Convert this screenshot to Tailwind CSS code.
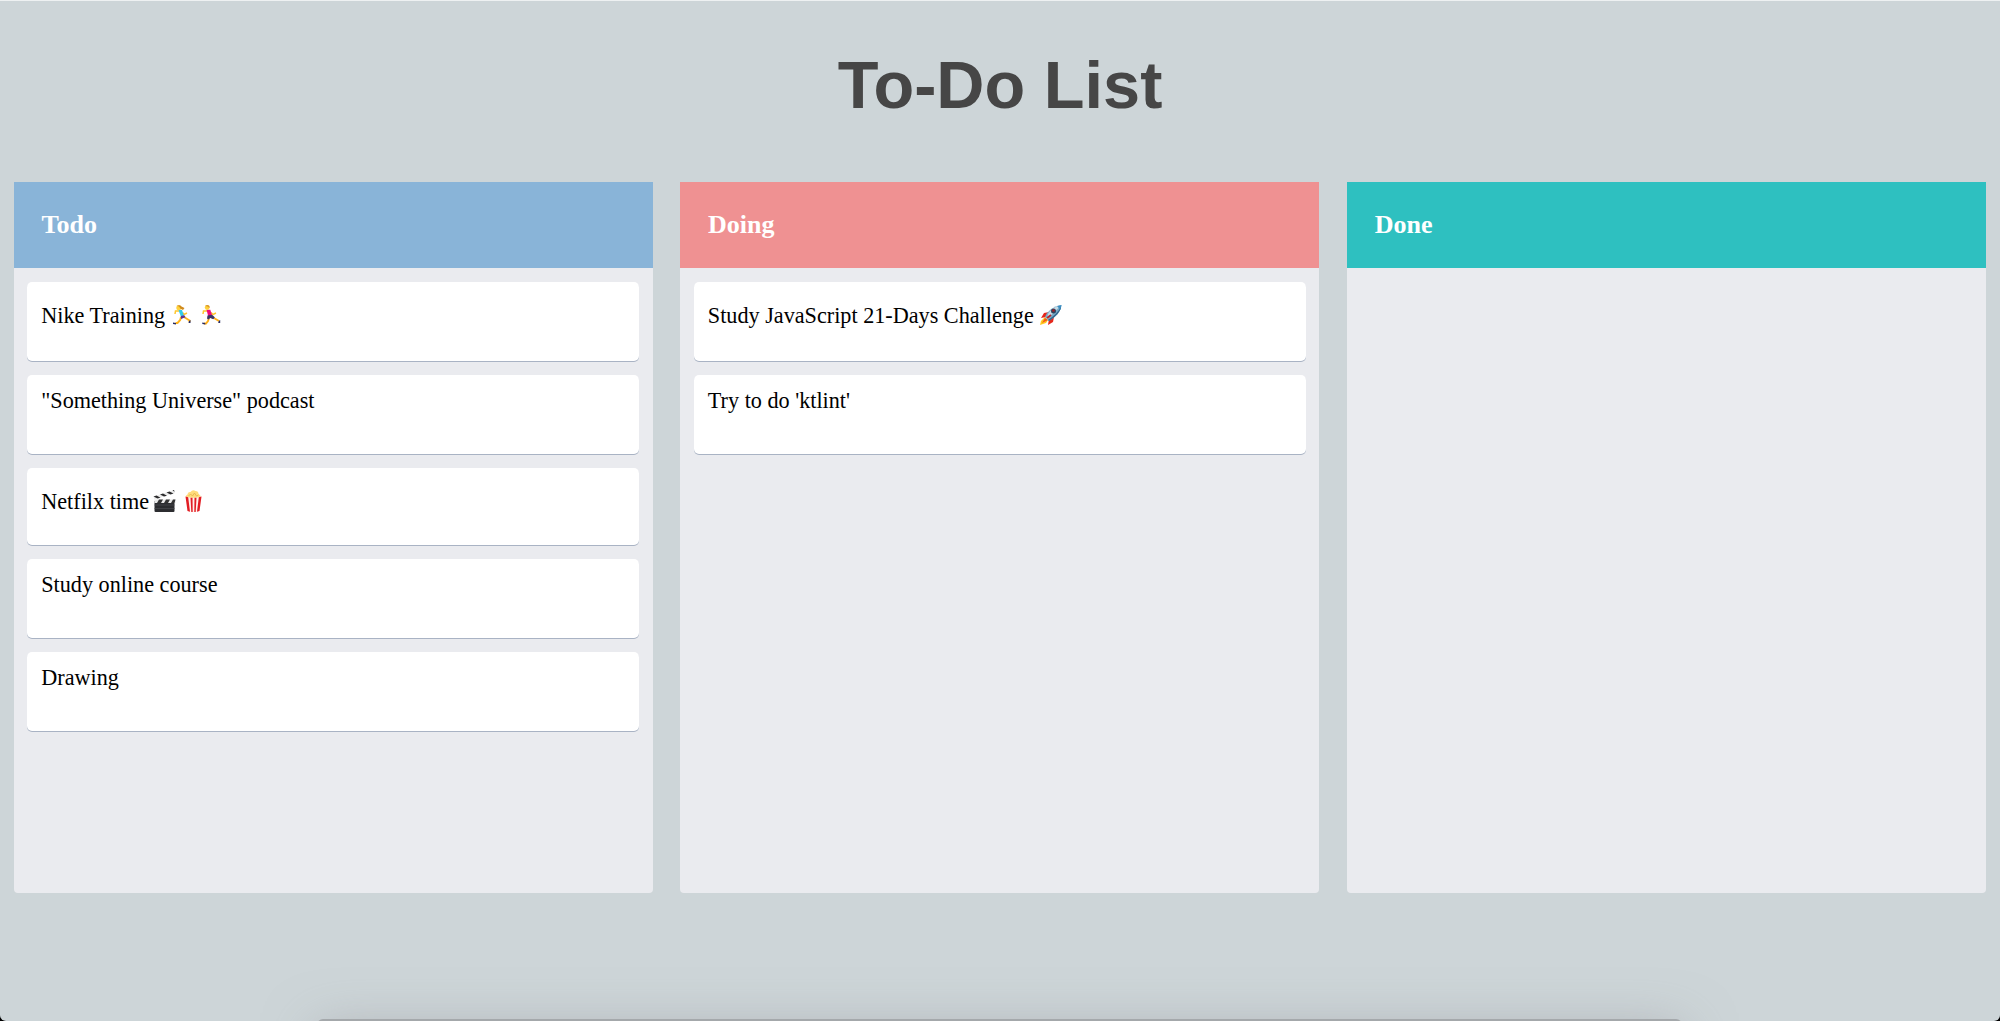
<!DOCTYPE html>
<html lang="en">
<head>
<meta charset="utf-8">
<title>To-Do List</title>
<script src="https://cdn.jsdelivr.net/npm/@tailwindcss/browser@4"></script>
</head>
<body class="bg-black">
<div class="relative h-[1021px] w-full overflow-hidden rounded-b-[6px] border-t border-[#eef1f2] bg-[#cdd5d8] font-['Liberation_Serif',serif] text-black">
  <h1 class="flex h-[181px] items-start justify-center pt-[45px] font-['Liberation_Sans',sans-serif] text-[66.7px] leading-[78px] font-bold text-[#464646]">To-Do List</h1>
  <main class="grid h-[711px] grid-cols-3 gap-[27.75px] pr-[14.25px] pl-[13.75px]">
    <section class="overflow-hidden rounded-b-[4px] bg-[#eaebef]">
      <h2 class="h-[86px] bg-[#89b4d8] pt-[27px] pl-[27.75px] text-[26px] leading-[32px] font-bold text-white">Todo</h2>
      <ul class="flex flex-col gap-[14px] px-[13.5px] pt-[14px] text-[22.2px] leading-[26px]">
        <li class="flex h-[79px] items-start rounded-[5px] bg-white pt-[21px] pl-[14px] shadow-[0_1px_0_#a9b3c4]">
          <span>Nike Training</span>
          <svg class="ml-[7px] mt-[2px] h-[20px] w-[20px]" viewBox="0 0 20 20"><path d="M12 12l5.500 3.500v1.500M9 12l-.8 3-2.700 3H3.500" fill="none" stroke="#ffb31a" stroke-width="1.900"/><path d="M7 6L3.500 6 3 9M10.500 7.500l1.500 2 3-1.500" fill="none" stroke="#ffc62c" stroke-width="1.500"/><path d="M6.500 5h3.500l2 6-3 1z" fill="#32ccea"/><path d="M8.800 11l3.500-.8 1.200 2-4.500 1.800z" fill="#60348a"/><circle cx="6.800" cy="2.700" r="2.500" fill="#ffd23c"/><path d="M4.500.8Q8-.8 9.500 1.500l3 1.500-1.500 2-2.500-1.200L7 1.500z" fill="#d08a1c"/><path d="M1 17.600l3 .4v1.500L1 19zM17 16l1.500-1v3h-2z" fill="#292b62"/></svg>
          <svg class="ml-[10px] mt-[2px] h-[20px] w-[19px]" viewBox="0 0 19 20"><path d="M11 12.500l6 3.500M7 13l-1 3-2 2.500H2" fill="none" stroke="#ffae16" stroke-width="1.900"/><path d="M6 6L1.500 6 1 9M9 7.500l2 2 3-1.500" fill="none" stroke="#ffc62c" stroke-width="1.500"/><path d="M4.500 4.800h3.800l2 6-4 .7z" fill="#ef0c78"/><path d="M5.500 10.500l4.500-.8 2.800 2.500-1.500 2-3-1.200-2 1.500-1.300-1z" fill="#383565"/><circle cx="5.200" cy="2.600" r="2.400" fill="#ffd13c"/><path d="M3 .9Q5.500-.8 7.500 1v2L5.500 1.400z" fill="#d89628"/><path d="M.3 17.600l3 .4v1.500L.3 19zM16.700 16l1.500-1v3h-2z" fill="#292b62"/></svg>
        </li>
        <li class="h-[79px] rounded-[5px] bg-white pt-[13px] pl-[14px] shadow-[0_1px_0_#a9b3c4]">"Something Universe" podcast</li>
        <li class="flex h-[77px] items-start rounded-[5px] bg-white pt-[21px] pl-[14px] shadow-[0_1px_0_#a9b3c4]">
          <span>Netfilx time</span>
          <svg class="ml-[4px] mt-px h-[22px] w-[23px]" viewBox="0 0 23 22"><path d="M1.500 11h20v10q0 1-1 1h-18q-1 0-1-1z" fill="#2c2d30"/><path d="M1.500 15h20M1.500 18.500h20" stroke="#4b4c50" stroke-width=".7"/><path d="M1.500 9.500h21v3.500h-21z" fill="#e8e8e8"/><path d="M4 13l2-3.500h4L8 13zM11 13l2-3.500h4L15 13zM18 13l2-3.500h2.500L21.500 13z" fill="#333"/><path d="M.5 6.500L21 0l1 3L1.500 9.500z" fill="#ececec"/><path d="M.5 6.500l3-1 4 2.200-3 .9zM7 4.400l3-.9 4 2.200-3 .9zM13.500 2.400l3-.9 4 2.100-3 .9zM19.500.5L21 0l.6 1.700z" fill="#2b2b2d"/></svg>
          <svg class="ml-[9px] mt-px h-[22px] w-[17px]" viewBox="0 0 16 22"><path d="M1 9Q-.5 5 2 4.500 2 1.500 5 2q2-3 5-1 3 0 3 3 3 1 2 5z" fill="#ffdc7c"/><path d="M3 6l2-2 2 2 2-3 2 3 2-1" fill="none" stroke="#e5b34b" stroke-width=".8"/><path d="M0 6.500Q8 9 16 6.500L14 21q-6 2-12 0z" fill="#fff3ed"/><path d="M0 6.500L2.700 7.200 4.500 21.700 2 21zM5 7.700h2L7.200 22H5.800zM9 7.700h2L10.200 22H8.800zM13.300 7.200L16 6.500 14 21l-2.500.7z" fill="#e21d24"/></svg>
        </li>
        <li class="h-[79px] rounded-[5px] bg-white pt-[13px] pl-[14px] shadow-[0_1px_0_#a9b3c4]">Study online course</li>
        <li class="h-[79px] rounded-[5px] bg-white pt-[13px] pl-[14px] shadow-[0_1px_0_#a9b3c4]">Drawing</li>
      </ul>
    </section>
    <section class="overflow-hidden rounded-b-[4px] bg-[#eaebef]">
      <h2 class="h-[86px] bg-[#ef9192] pt-[27px] pl-[27.75px] text-[26px] leading-[32px] font-bold text-white">Doing</h2>
      <ul class="flex flex-col gap-[14px] px-[13.5px] pt-[14px] text-[22.2px] leading-[26px]">
        <li class="flex h-[79px] items-start rounded-[5px] bg-white pt-[21px] pl-[14px] shadow-[0_1px_0_#a9b3c4]">
          <span>Study JavaScript 21-Days Challenge</span>
          <svg class="ml-[6px] mt-[2px] h-[21px] w-[22px]" viewBox="0 0 22 21"><path d="M5 12L1 16l-1 4 6-2 2-3z" fill="#ffc91f"/><path d="M9 7L4 8 1 13l5-1zM14 12l-1 5-5 3 1-6z" fill="#e5271c"/><path d="M5 13l-3 5 6-3z" fill="#f55a19"/><path d="M5 12Q9 2 21.500 0 21 9 9 16z" fill="#78acc8"/><path d="M8 9Q12 2 21.500 0L7 14z" fill="#c7dbe5"/><path d="M21.500 0L17 1l3.500 4z" fill="#3b8fc4"/><path d="M21 2Q20 9 9 16l-1-1Q17 9 21 2z" fill="#34658c"/><circle cx="13.500" cy="6" r="2.500" fill="#31435e"/><path d="M12 5l2-1 1 2-2 1z" fill="#a51c22"/><path d="M7 13l4-3" stroke="#be2429" stroke-width="1.800"/></svg>
        </li>
        <li class="h-[79px] rounded-[5px] bg-white pt-[13px] pl-[14px] shadow-[0_1px_0_#a9b3c4]">Try to do 'ktlint'</li>
      </ul>
    </section>
    <section class="overflow-hidden rounded-b-[4px] bg-[#eaebef]">
      <h2 class="h-[86px] bg-[#2ec0c0] pt-[27px] pl-[27.75px] text-[26px] leading-[32px] font-bold text-white">Done</h2>
    </section>
  </main>
  <div class="absolute top-[1018px] left-[317px] h-[60px] w-[1365px] rounded-[6px] bg-[#a4a8ab] shadow-[0_10px_52px_rgba(150,148,153,0.55)]"></div>
</div>
</body>
</html>
